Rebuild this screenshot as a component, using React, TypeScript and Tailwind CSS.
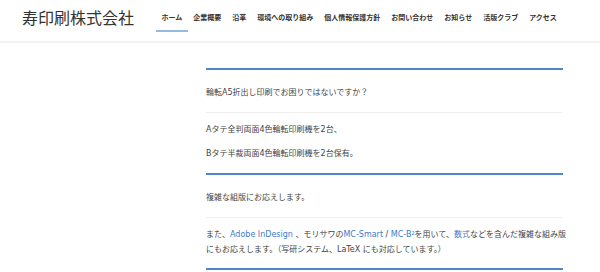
const nav = [
  "ホーム",
  "企業概要",
  "沿革",
  "環境への取り組み",
  "個人情報保護方針",
  "お問い合わせ",
  "お知らせ",
  "活版クラブ",
  "アクセス",
];

const jp = { fontFamily: '"DejaVu Sans", "Noto Sans CJK JP", sans-serif' };

export default function App() {
  return (
    <div className="w-[600px] h-[272px] overflow-hidden bg-white text-[#444]" style={jp}>
      {/* Header */}
      <header className="h-[41px] flex items-start">
        <div
          className="ml-[22px] w-[134px] pt-[7px] text-[16px] leading-[20px] text-[#333]"
          style={{ fontFamily: '"Noto Sans CJK JP", sans-serif' }}
        >
          寿印刷株式会社
        </div>
        <nav className="flex" style={{ fontFamily: '"Noto Sans CJK JP", sans-serif' }}>
          {nav.map((item, i) => (
            <div key={item} className="flex flex-col items-stretch">
              <span className="px-[5.5px] pt-[13px] pb-[9px] text-[7px] leading-[8px] font-bold text-[#333] whitespace-nowrap">
                {item}
              </span>
              <div className={i === 0 ? "h-[2px] bg-[#93bcdf]" : "h-[2px]"} />
            </div>
          ))}
        </nav>
      </header>
      <div className="h-[2px] bg-[#f2f2f2]" />

      {/* Content */}
      <main className="ml-[206px] w-[357px] pt-[25px] text-[8px] leading-[15px]">
        <section className="border-t-2 border-[#4f87c5]">
          <p className="pt-[15px] pb-[12px] border-b border-[#f0f0f0]">
            輪転A5折出し印刷でお困りではないですか？
          </p>
          <div className="pt-[9px] pb-[12px]">
            <p>Aタテ全判両面4色輪転印刷機を2台、</p>
            <p className="mt-[9px]">Bタテ半裁両面4色輪転印刷機を2台保有。</p>
          </div>
        </section>

        <section className="border-t-2 border-[#4f87c5]">
          <p className="pt-[15px] pb-[12px] border-b border-[#f0f0f0]">
            複雑な組版にお応えします。
          </p>
          <div className="pt-[9px] pb-[11px]">
            <p className="whitespace-nowrap">
              また、<span className="text-[#3a7cc7]">Adobe InDesign</span> 、モリサワの
              <span className="text-[#3a7cc7]">MC-Smart</span> /{" "}
              <span className="text-[#3a7cc7]">
                MC-B<sup className="text-[5px]">2</sup>
              </span>
              を用いて、<span className="text-[#3a7cc7]">数式</span>などを含んだ複雑な組み版
              <br />
              にもお応えします。（写研システム、LaTeX にも対応しています。）
            </p>
          </div>
        </section>
        <div className="border-t-2 border-[#4f87c5]" />
      </main>
    </div>
  );
}
